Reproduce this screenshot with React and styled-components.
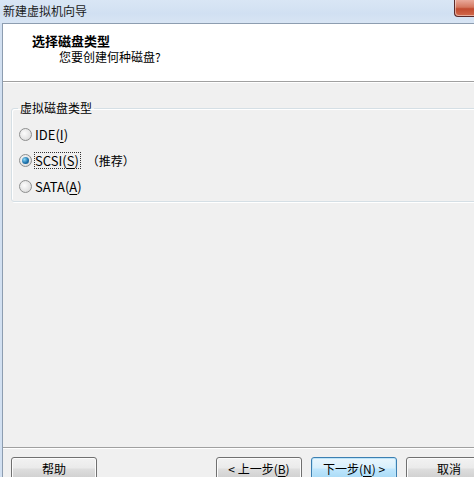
import styled, { createGlobalStyle } from 'styled-components';

const GlobalStyle = createGlobalStyle`
  html, body {
    margin:0;
    padding:0;
    overflow:hidden;
    background:#f0f0f0;
  }
  body {
    font-family:"Noto Sans CJK SC", "Liberation Sans", sans-serif;
    font-size:12px;
    color:#000;
  }
`;

//----------------------WINDOW FRAME-----------------
const Window = styled.div`
  display:flex;
  flex-direction:column;
  width:474px;
  height:480px;
  overflow:hidden;
  background:#d2e0f1;
`;

const TitleBar = styled.div`
  display:flex;
  align-items:flex-start;
  justify-content:space-between;
  height:23px;
  flex-shrink:0;
  background:linear-gradient(#d9e6f5, #d1e0f2 60%, #d8e5f4);
`;

const Title = styled.span`
  padding:3px 0 0 3px;
  font-size:12px;
  line-height:15px;
  color:#1b1b1b;
`;

const CloseBtn = styled.div`
  width:19px;
  height:16px;
  border:1px solid #5a2a2a;
  border-top:none;
  border-right:none;
  border-bottom-left-radius:4px;
  background:linear-gradient(#e9a99a, #d4775f 45%, #c14b30 55%, #d26a4c);
  box-shadow:inset 1px -1px 0 rgba(255,255,255,0.45);
`;

const Frame = styled.div`
  display:flex;
  flex:1;
  min-height:0;
  padding-left:2px;
`;

const Client = styled.div`
  display:flex;
  flex-direction:column;
  flex:1;
  min-width:0;
  border-top:1px solid #8d9db0;
  border-left:1px solid #8d9db0;
  background:#f0f0f0;
`;

//----------------------HEADER-----------------
const Header = styled.div`
  display:flex;
  flex-direction:column;
  height:57px;
  flex-shrink:0;
  background:#fff;
  padding:8px 0 0 29px;
  box-sizing:border-box;
`;

const HeaderTitle = styled.div`
  font-weight:bold;
  font-size:13px;
  line-height:17px;
`;

const HeaderSub = styled.div`
  font-size:12px;
  line-height:16px;
  padding-left:27px;
`;

const Etched = styled.div`
  height:1px;
  flex-shrink:0;
  background:#a0a0a0;
  border-bottom:1px solid #fff;
`;

//----------------------BODY-----------------
const Body = styled.div`
  flex:1;
  min-height:0;
  padding:17px 0 0 8px;
`;

const Group = styled.fieldset`
  margin:0 -30px 0 0;
  padding:5px 0 2px 7px;
  border:1px solid #d5dfe5;
  border-radius:3px;
  box-shadow:inset 1px 1px 0 #fff, 1px 1px 0 #fff;
`;

const Legend = styled.legend`
  padding:0 2px;
  margin-left:-1px;
  font-size:12px;
  line-height:16px;
`;

const Option = styled.label`
  display:flex;
  align-items:center;
  height:26px;
  font-size:12px;
`;

const RadioDot = styled.span`
  width:11px;
  height:11px;
  border-radius:50%;
  border:1px solid #8e8f8f;
  background:radial-gradient(circle at 40% 40%, #fcfcfc, #e2e2e2 65%, #c4c4c4);
  display:flex;
  align-items:center;
  justify-content:center;
  margin-right:2px;
  &::after {
    content:"";
    display:${p => (p.checked ? 'block' : 'none')};
    width:7px;
    height:7px;
    border-radius:50%;
    background:radial-gradient(circle at 35% 35%, #8ad8f8, #1f74ad 55%, #0b4a7a);
  }
`;

const OptText = styled.span`
  padding:0 1px 0 0;
  font-size:13px;
  line-height:15px;
  border:1px dotted ${p => (p.focused ? '#333' : 'transparent')};
`;

const Key = styled.u`
  text-underline-offset:2px;
`;

const Note = styled.span`
  margin-left:6px;
`;

//----------------------FOOTER-----------------
const Footer = styled.div`
  display:flex;
  flex-direction:column;
  flex-shrink:0;
`;

const Buttons = styled.div`
  display:flex;
  padding:8px 0 0 8px;
`;

const Button = styled.div`
  width:84px;
  height:21px;
  flex-shrink:0;
  display:flex;
  align-items:center;
  justify-content:center;
  border:1px solid ${p => (p.primary ? '#3c7fb1' : '#707070')};
  border-radius:3px;
  margin-right:${p => p.gap || 0}px;
  font-size:12px;
  background:${p => p.primary
    ? 'linear-gradient(#eaf6fd, #d9f0fc 45%, #bee6fd 55%, #a7d9f5)'
    : 'linear-gradient(#f2f2f2, #ebebeb 45%, #dddddd 55%, #cfcfcf)'};
  box-shadow:inset 0 0 0 1px ${p => (p.primary ? '#bce4f9' : '#fcfcfc')};
`;

const App = () => {
  return <Window>
    <GlobalStyle />

    <TitleBar>
      <Title>新建虚拟机向导</Title>
      <CloseBtn />
    </TitleBar>

    <Frame>
      <Client>

        <Header>
          <HeaderTitle>选择磁盘类型</HeaderTitle>
          <HeaderSub>您要创建何种磁盘?</HeaderSub>
        </Header>
        <Etched />

        <Body>
          <Group>
            <Legend>虚拟磁盘类型</Legend>
            <Option>
              <RadioDot />
              <OptText>IDE(<Key>I</Key>)</OptText>
            </Option>
            <Option>
              <RadioDot checked />
              <OptText focused>SCSI(<Key>S</Key>)</OptText>
              <Note>（推荐）</Note>
            </Option>
            <Option>
              <RadioDot />
              <OptText>SATA(<Key>A</Key>)</OptText>
            </Option>
          </Group>
        </Body>

        <Footer>
          <Etched />
          <Buttons>
            <Button gap={119}>帮助</Button>
            <Button gap={9}>&lt; 上一步(<Key>B</Key>)</Button>
            <Button primary gap={9}>下一步(<Key>N</Key>) &gt;</Button>
            <Button>取消</Button>
          </Buttons>
        </Footer>

      </Client>
    </Frame>
  </Window>
}

export default App;
